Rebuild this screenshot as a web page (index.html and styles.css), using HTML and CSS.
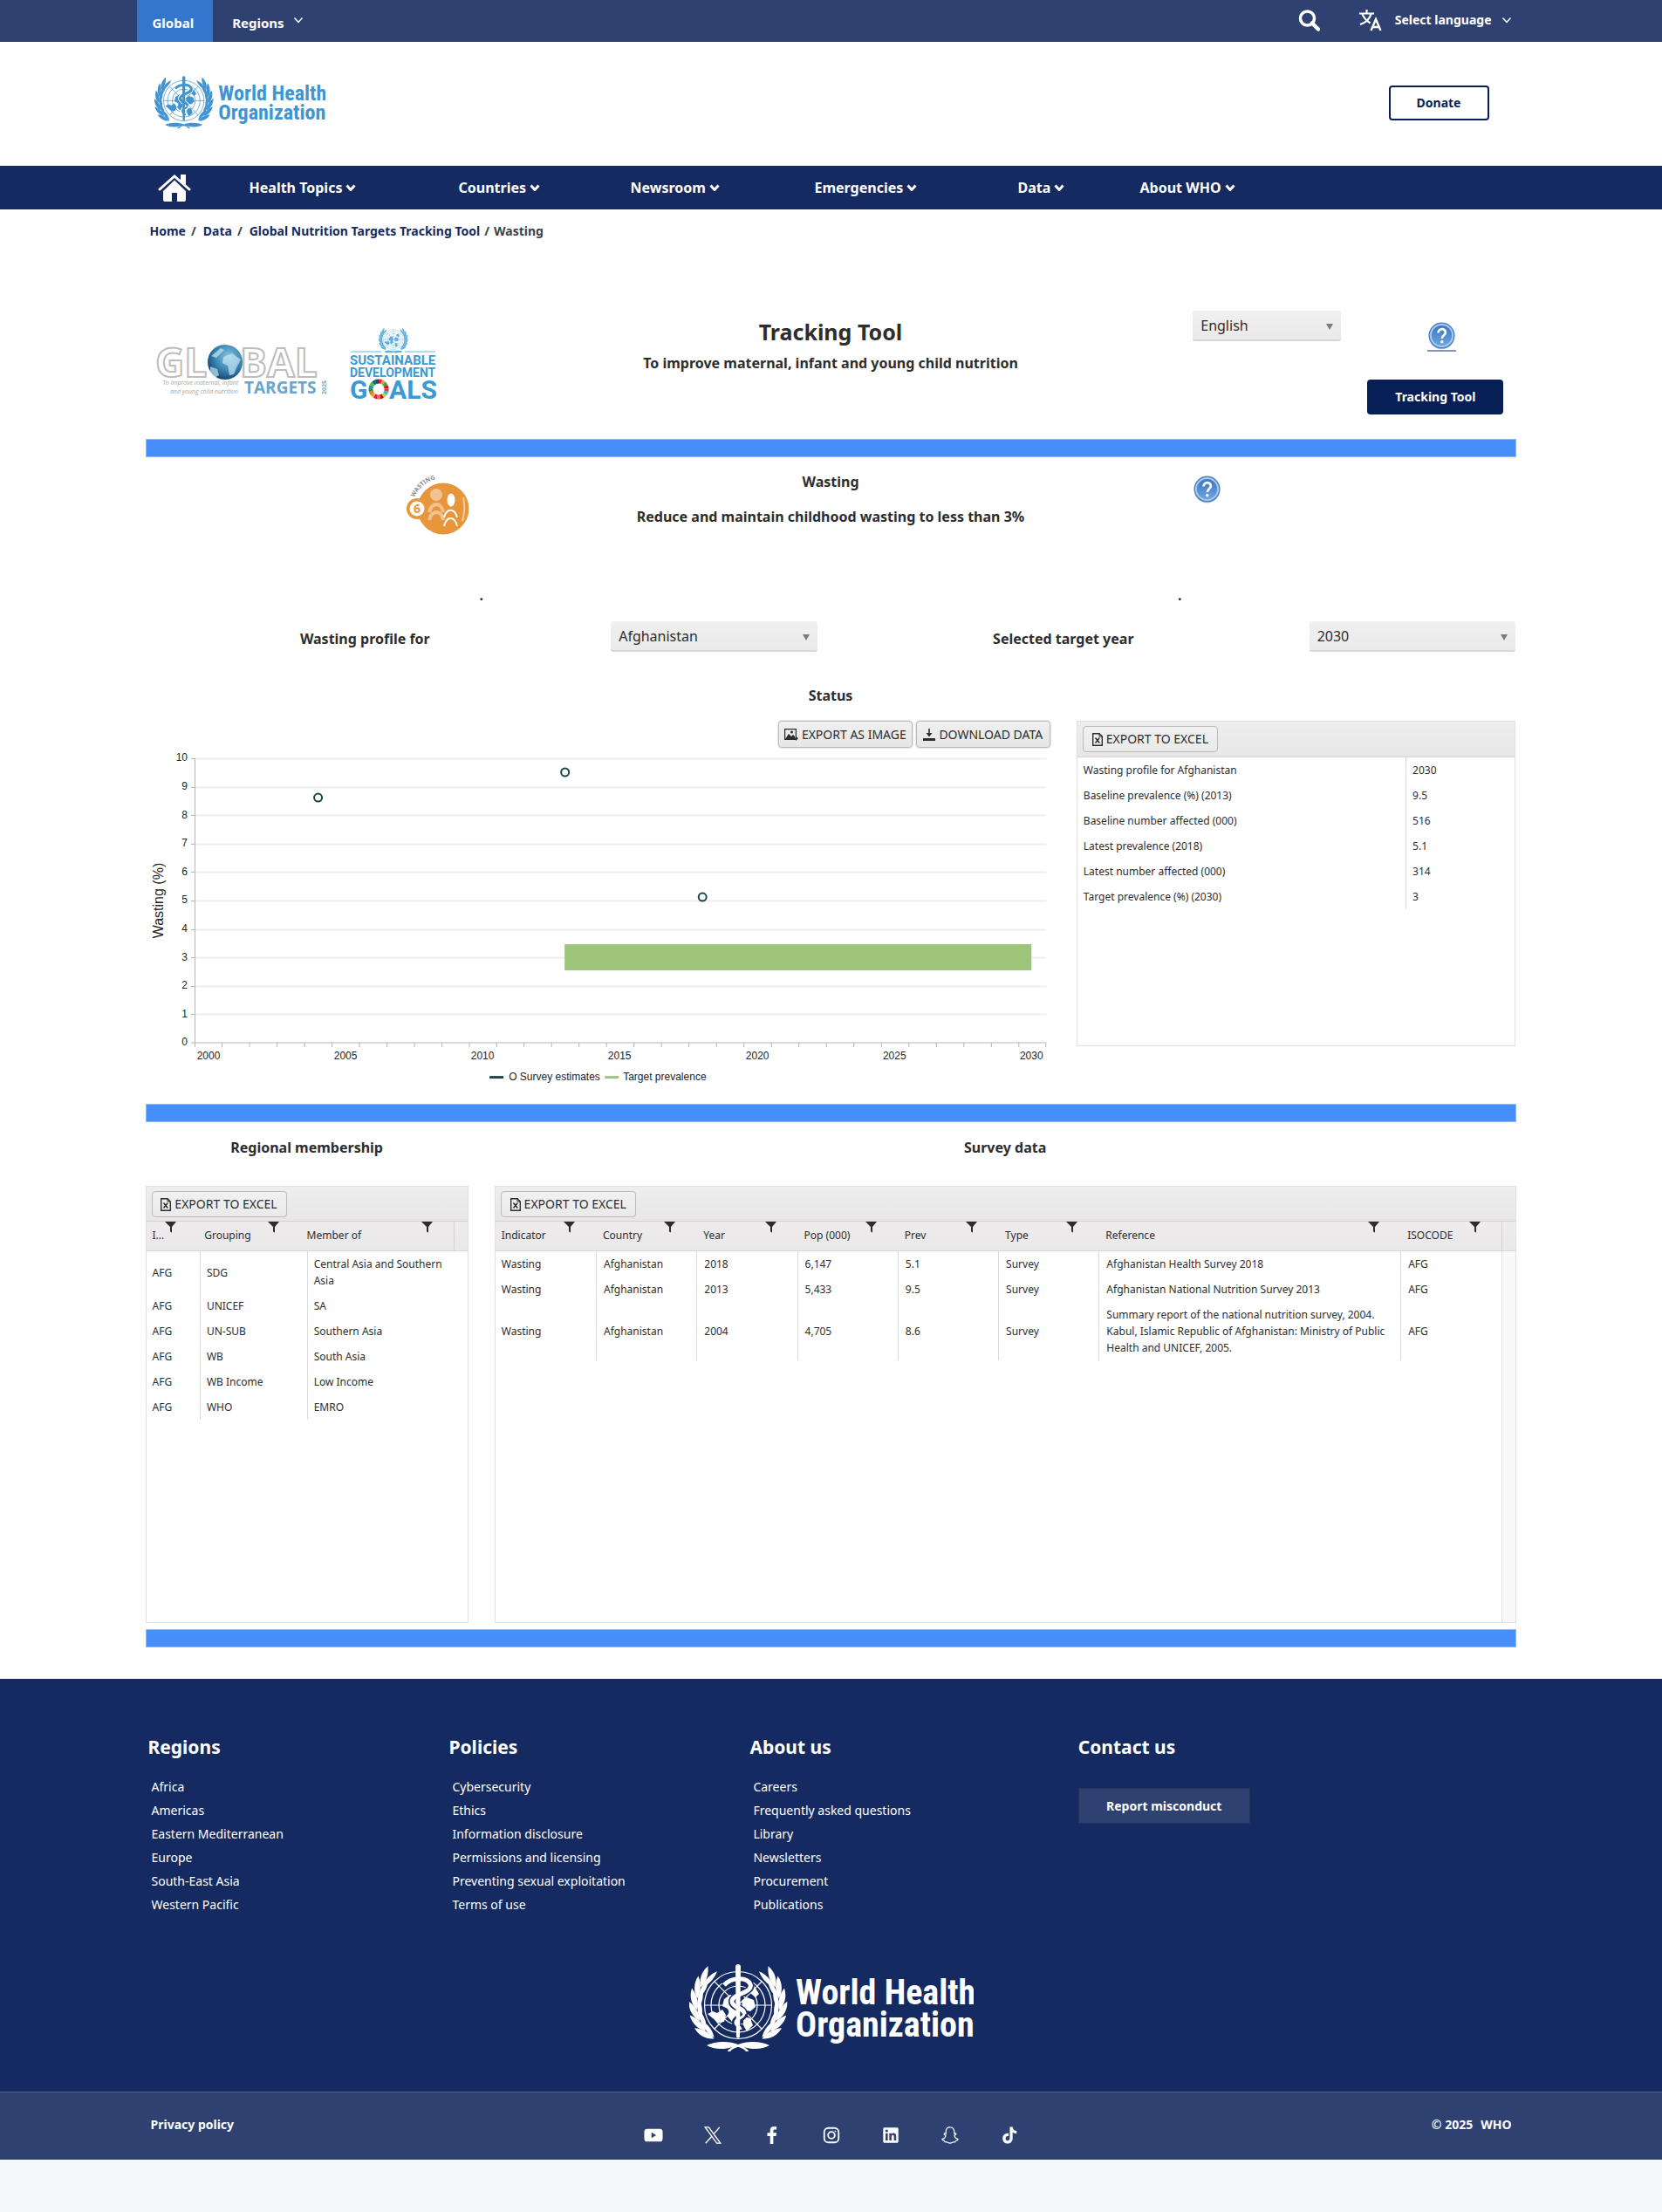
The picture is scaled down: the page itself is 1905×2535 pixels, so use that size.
FILE: index.html
```html
<!DOCTYPE html>
<html lang="en">
<head>
<meta charset="utf-8">
<meta name="viewport" content="width=device-width, initial-scale=1">
<title>Global Nutrition Targets Tracking Tool - Wasting</title>
<link rel="stylesheet" href="styles.css">
</head>
<body>
<svg class="sprite" aria-hidden="true">
  <defs>
    <linearGradient id="help-fill" x1="0" y1="0" x2="0" y2="1"><stop offset="0" stop-color="#3b74c4"/><stop offset="1" stop-color="#6fa5dc"/></linearGradient>
    <radialGradient id="globe-fill" cx=".6" cy=".35" r=".7"><stop offset="0" stop-color="#8cc6e0"/><stop offset=".55" stop-color="#3a86b4"/><stop offset="1" stop-color="#15406b"/></radialGradient>
    <path id="leaf-out" d="M10 58C3 53 -1 44 1 34C7 40 11 48 10 58Z"/>
    <path id="leaf-in" d="M11 57C15 50 16 42 13 32C9 39 8 48 11 57Z"/>
    <g id="leaf"><use href="#leaf-out"/><use href="#leaf-in"/></g>
    <g id="branch">
      <use href="#leaf" transform="rotate(39 56 47)"/>
      <use href="#leaf" transform="rotate(23 56 47)"/>
      <use href="#leaf" transform="rotate(7 56 47)"/>
      <use href="#leaf" transform="rotate(-9 56 47)"/>
      <use href="#leaf" transform="rotate(-25 56 47)"/>
      <use href="#leaf" transform="rotate(-41 56 47)"/>
      <path d="M20 93C30 88 46 88 56 92C64 95 68 98 68 100H65C62 96 56 94 50 95C40 98 28 98 20 93Z"/>
    </g>
    <g id="globe-grid" fill="none" stroke="currentColor" stroke-width="1.2">
      <circle cx="56" cy="47" r="38.500"/><circle cx="56" cy="47" r="31"/><circle cx="56" cy="47" r="22"/><circle cx="56" cy="47" r="12"/>
      <path d="M17 47H95M56 9V86M29 20L83 74M83 20L29 74"/>
    </g>
    <g id="land">
      <path d="M21 57L27 54L32 56L38 52L42 58L40 66L33 67L27 62Z"/>
      <path d="M40 40L47 35L54 36V58L49 66L44 60L46 52L38 48Z"/>
      <path d="M60 42L66 38L74 41L76 49L70 54L62 52Z"/>
      <path d="M62 60L70 62L73 70L66 77L62 70Z"/>
      <path d="M66 30L74 24L80 34L76 38Z"/>
    </g>
    <g id="emblem">
      <use href="#globe-grid"/><use href="#land"/>
      <use href="#branch"/><use href="#branch" transform="translate(112 0) scale(-1 1)"/>
      <g class="snake">
        <path class="snake-edge" d="M40 24C48 15 66 14 70 23C74 33 48 34 49 43C50 51 64 50 63 57C62 63 52 62 53 67C53 71 59 71 59 75"/>
        <path class="snake-body" d="M40 24C48 15 66 14 70 23C74 33 48 34 49 43C50 51 64 50 63 57"/>
        <path class="snake-tail" d="M63 57C62 63 52 62 53 67C53 71 59 71 59 75"/>
        <path d="M53 3C53 -1 59 -1 59 3L58 84H54Z"/>
      </g>
    </g>
    <symbol id="who-logo" viewBox="0 0 326 101">
      <use href="#emblem"/>
      <text class="who-word" x="122" y="46">World Health</text>
      <text class="who-word" x="122" y="83">Organization</text>
    </symbol>
    <symbol id="help" viewBox="0 0 33 33">
      <circle cx="16.500" cy="17.500" r="15" fill="#000" opacity=".15"/>
      <circle cx="16.500" cy="16" r="15.500" fill="#4a80c6"/><circle cx="16.500" cy="16" r="13" fill="url(#help-fill)" stroke="#a9cdf0" stroke-width="2"/>
      <path d="M12.500 13C12.500 7 21 7 21 12.500C21 16 16.800 15.500 16.800 19.500" fill="none" stroke="#fff" stroke-width="2.800"/><circle cx="16.800" cy="23.500" r="1.800" fill="#fff"/>
    </symbol>
    <symbol id="chev" viewBox="0 0 12 8"><path d="M1.500 1.500L6 6.500L10.500 1.500" fill="none" stroke="currentColor"/></symbol>
    <symbol id="funnel" viewBox="0 0 13 13"><path d="M0 0H13L8 6V12.500L6 11.500V6Z"/></symbol>
    <symbol id="excel" viewBox="0 0 12 15"><path d="M.7.700H8L11.300 4V14.300H.7Z" fill="none" stroke="currentColor" stroke-width="1.400"/><path d="M8 .5V4H11.500" fill="none" stroke="currentColor"/><path d="M3.500 5.500L8.300 11.500M8.300 5.500L3.500 11.500" stroke="currentColor" stroke-width="1.500"/></symbol>
    <symbol id="tri" viewBox="0 0 8 7"><path d="M0 0H8L4 7Z"/></symbol>
  </defs>
</svg>

<div class="topbar">
  <div class="topbar-inner">
    <a class="tab tab-active" href="#">Global</a>
    <a class="tab" href="#">Regions <svg class="chev chev-up"><use href="#chev"/></svg></a>
    <div class="topbar-tools">
      <button class="icon-button" type="button" aria-label="Search"><svg width="25" height="25" viewBox="0 0 25 25"><circle cx="10.500" cy="10" r="8" fill="none" stroke="currentColor" stroke-width="3.500"/><path d="M16 15.500L23 22.500" stroke="currentColor" stroke-width="4.500" stroke-linecap="round"/></svg></button>
      <button class="lang" type="button">
        <svg class="line" width="26" height="25" viewBox="0 0 26 25" stroke-width="2.200"><path d="M0 4.500H17M8.500 0V4M13.500 5C12 11 7 15 1 17M3.500 5C5 9.500 8 12.500 12.500 15.500"/><path d="M13.500 24L19 11L24.500 24M15.500 20H22.500" stroke-width="2.400"/></svg>
        <span>Select language</span> <svg class="chev"><use href="#chev"/></svg>
      </button>
    </div>
  </div>
</div>

<header class="masthead">
  <a href="#" aria-label="World Health Organization"><svg class="logo-small"><use href="#who-logo"/></svg></a>
  <button class="donate" type="button">Donate</button>
</header>

<nav class="mainnav" aria-label="Main">
  <div class="mainnav-inner">
    <a href="#" aria-label="Home"><svg width="38" height="31" viewBox="0 0 38 31" fill="currentColor"><path d="M19 6.500L32 19V29Q32 31 30 31H22V21H16V31H8Q6 31 6 29V19Z"/><path d="M2 17L19 2L36 17" fill="none" stroke="currentColor" stroke-width="3" stroke-linecap="round"/><path d="M26 0H32V12L26 7Z"/></svg></a>
    <a href="#">Health Topics <svg class="chev chev-bold"><use href="#chev"/></svg></a>
    <a href="#">Countries <svg class="chev chev-bold"><use href="#chev"/></svg></a>
    <a href="#">Newsroom <svg class="chev chev-bold"><use href="#chev"/></svg></a>
    <a href="#">Emergencies <svg class="chev chev-bold"><use href="#chev"/></svg></a>
    <a href="#">Data <svg class="chev chev-bold"><use href="#chev"/></svg></a>
    <a href="#">About WHO <svg class="chev chev-bold"><use href="#chev"/></svg></a>
  </div>
</nav>

<main class="page">
  <nav class="crumbs" aria-label="Breadcrumb">
    <a href="#">Home</a><span class="slash">/</span><a href="#">Data</a><span class="slash">/</span><a href="#">Global Nutrition Targets Tracking Tool</a><span class="slash-end">/</span><span>Wasting</span>
  </nav>

  <section class="hero">
    <div class="partner-logos">
      <svg width="206" height="84" viewBox="0 0 206 84" role="img" aria-label="Global Targets 2025">
        <text class="gt-big" x="6" y="57">GL</text><text class="gt-big" x="103" y="57">BAL</text>
        <g transform="translate(-3 -1)">
          <circle cx="89" cy="41" r="20" fill="url(#globe-fill)"/>
          <path d="M87 35L97 31L107 38L103 45L99 55L94 56L92 45L86 42ZM72 46L80 49L82 56L77 59L72 52ZM73 34L84 25L88 27L79 36Z" fill="#c5e6f2" opacity=".7"/>
        </g>
        <text class="gt-note" x="101" y="66">To improve maternal, infant</text>
        <text class="gt-note" x="101" y="76">and young child nutrition</text>
        <text class="gt-targets" x="108" y="76">TARGETS</text>
        <text class="gt-year" transform="translate(202 77) rotate(-90)">2025</text>
      </svg>
      <svg width="106" height="84" viewBox="0 0 106 84" role="img" aria-label="Sustainable Development Goals">
        <g class="un" transform="translate(34 0) scale(.3)"><use href="#globe-grid"/><use href="#land"/><use href="#branch"/><use href="#branch" transform="translate(112 0) scale(-1 1)"/></g>
        <path d="M2 28H37M64 28H99" stroke="#6cb6e0" stroke-width="1"/>
        <text class="sdg sdg-a" x="1" y="43">SUSTAINABLE</text>
        <text class="sdg sdg-b" x="1" y="57">DEVELOPMENT</text>
        <text class="sdg sdg-c" x="1" y="82">G</text><text class="sdg sdg-c" x="46" y="82">ALS</text>
        <g class="wheel" transform="rotate(-90 34 71)">
          <circle stroke="#e5243b" cx="34" cy="71" r="9" pathLength="17"/>
          <circle stroke="#dda63a" cx="34" cy="71" r="9" pathLength="17" stroke-dashoffset="-1"/>
          <circle stroke="#4c9f38" cx="34" cy="71" r="9" pathLength="17" stroke-dashoffset="-2"/>
          <circle stroke="#c5192d" cx="34" cy="71" r="9" pathLength="17" stroke-dashoffset="-3"/>
          <circle stroke="#ff3a21" cx="34" cy="71" r="9" pathLength="17" stroke-dashoffset="-4"/>
          <circle stroke="#26bde2" cx="34" cy="71" r="9" pathLength="17" stroke-dashoffset="-5"/>
          <circle stroke="#fcc30b" cx="34" cy="71" r="9" pathLength="17" stroke-dashoffset="-6"/>
          <circle stroke="#a21942" cx="34" cy="71" r="9" pathLength="17" stroke-dashoffset="-7"/>
          <circle stroke="#fd6925" cx="34" cy="71" r="9" pathLength="17" stroke-dashoffset="-8"/>
          <circle stroke="#dd1367" cx="34" cy="71" r="9" pathLength="17" stroke-dashoffset="-9"/>
          <circle stroke="#fd9d24" cx="34" cy="71" r="9" pathLength="17" stroke-dashoffset="-10"/>
          <circle stroke="#bf8b2e" cx="34" cy="71" r="9" pathLength="17" stroke-dashoffset="-11"/>
          <circle stroke="#3f7e44" cx="34" cy="71" r="9" pathLength="17" stroke-dashoffset="-12"/>
          <circle stroke="#0a97d9" cx="34" cy="71" r="9" pathLength="17" stroke-dashoffset="-13"/>
          <circle stroke="#56c02b" cx="34" cy="71" r="9" pathLength="17" stroke-dashoffset="-14"/>
          <circle stroke="#00689d" cx="34" cy="71" r="9" pathLength="17" stroke-dashoffset="-15"/>
          <circle stroke="#19486a" cx="34" cy="71" r="9" pathLength="17" stroke-dashoffset="-16"/>
        </g>
      </svg>
    </div>
    <div class="hero-title">
      <h1>Tracking Tool</h1>
      <p>To improve maternal, infant and young child nutrition</p>
    </div>
    <div class="hero-tools">
      <span class="picker"><select aria-label="Language"><option>English</option></select><svg class="tri"><use href="#tri"/></svg></span>
      <div class="hero-actions">
        <a class="help-link" href="#" aria-label="Help"><svg class="help"><use href="#help"/></svg></a>
        <a class="primary" href="#">Tracking Tool</a>
      </div>
    </div>
  </section>

  <div class="rule"></div>

  <section class="target">
    <svg class="target-icon" width="72" height="70" viewBox="0 0 72 70" role="img" aria-label="Wasting, target 6">
      <circle cx="43" cy="39" r="29.500" fill="#e8963c"/>
      <circle cx="13" cy="39" r="12" fill="#e8963c"/><circle cx="13" cy="39" r="8.500" fill="#fff"/>
      <text class="six" x="9" y="44">6</text>
      <circle cx="35" cy="23" r="7" fill="#f2c392"/>
      <path d="M27 43C30 31 41 31 43 43M27 52C30 40 41 40 43 52" fill="none" stroke="#f2c392" stroke-width="4"/>
      <ellipse cx="52" cy="29" rx="4.500" ry="7.500" fill="#fff"/>
      <path d="M44 49C47 38 56 38 59 49M44 59C47 47 56 47 59 59" fill="none" stroke="#fff" stroke-width="2"/>
      <path d="M66 26Q69 39 65 53" fill="none" stroke="#f4cda5" stroke-width="2"/>
      <path id="arc" d="M10 26A36 36 0 0 1 42 4" fill="none"/>
      <text class="arc-text"><textPath href="#arc">WASTING</textPath></text>
    </svg>
    <div class="target-text"><h2>Wasting</h2><h2>Reduce and maintain childhood wasting to less than 3%</h2></div>
    <a class="target-help" href="#" aria-label="About wasting"><svg class="help"><use href="#help"/></svg></a>
  </section>

  <section class="filters">
    <div class="filter"><p class="dot">.</p><label for="country">Wasting profile for</label><span class="picker"><select id="country"><option>Afghanistan</option></select><svg class="tri"><use href="#tri"/></svg></span></div>
    <div class="filter"><p class="dot">.</p><label for="year">Selected target year</label><span class="picker"><select id="year"><option>2030</option></select><svg class="tri"><use href="#tri"/></svg></span></div>
  </section>

  <h2 class="status-title">Status</h2>
  <section class="status">
    <div class="chart-box">
      <div class="chart-tools">
        <button class="tool raised" type="button"><svg width="16" height="14" viewBox="0 0 16 14"><path d="M.6.600H13.400V12.400H.6Z" fill="none" stroke="currentColor" stroke-width="1.200"/><path d="M1 12L5 6L8 9L10 7L12 9V12Z"/><circle cx="8.500" cy="4" r="1.500"/><path d="M9 10.500H13V8.500L16 11.300L13 14V12H9Z"/></svg>EXPORT AS IMAGE</button>
        <button class="tool raised" type="button"><svg width="14" height="14" viewBox="0 0 14 14"><path d="M0 11H14V14H0Z"/><path d="M6.200 0H7.800V5H10.500L7 9.500L3.500 5H6.200Z"/></svg>DOWNLOAD DATA</button>
      </div>
      <svg class="chart" viewBox="0 0 1037 393" role="img" aria-label="Wasting prevalence by year">
        <path class="grid" d="M56 12.500H1032M56 45.500H1032M56 77.500H1032M56 110.500H1032M56 142.500H1032M56 175.500H1032M56 208.500H1032M56 240.500H1032M56 273.500H1032M56 305.500H1032"/>
        <path class="axis" d="M56.500 12V343M52 12.500H56M52 45.500H56M52 77.500H56M52 110.500H56M52 142.500H56M52 175.500H56M52 208.500H56M52 240.500H56M52 273.500H56M52 305.500H56M52 338H1032M87.500 338V343M119 338V343M150.500 338V343M182 338V343M213.500 338V343M245 338V343M276.500 338V343M308 338V343M339.500 338V343M371 338V343M402 338V343M433.500 338V343M465 338V343M496.500 338V343M528 338V343M559.500 338V343M591 338V343M622.500 338V343M654 338V343M685.500 338V343M717 338V343M748.500 338V343M780 338V343M811.500 338V343M843 338V343M874.500 338V343M906 338V343M937.500 338V343M969 338V343M1000.500 338V343M1031.500 338V343"/>
        <rect x="480" y="225" width="535" height="30" fill="#9dc57a"/>
        <g class="marks"><circle cx="197.500" cy="57" r="4.500"/><circle cx="480.500" cy="28" r="4.500"/><circle cx="638" cy="171" r="4.500"/></g>
        <g class="y-labels"><text x="48" y="15">10</text><text x="48" y="48">9</text><text x="48" y="81">8</text><text x="48" y="113">7</text><text x="48" y="146">6</text><text x="48" y="178">5</text><text x="48" y="211">4</text><text x="48" y="244">3</text><text x="48" y="276">2</text><text x="48" y="309">1</text><text x="48" y="341">0</text></g>
        <g class="x-labels"><text x="72" y="357">2000</text><text x="229" y="357">2005</text><text x="386" y="357">2010</text><text x="543" y="357">2015</text><text x="701" y="357">2020</text><text x="858" y="357">2025</text><text x="1015" y="357">2030</text></g>
        <text class="y-title" transform="translate(20 175) rotate(-90)">Wasting (%)</text>
        <path d="M394 377.500H410" stroke="#1c4747" stroke-width="3"/><text class="legend" x="416" y="381">O Survey estimates</text>
        <path d="M526 377.500H542" stroke="#9dc57a" stroke-width="3"/><text class="legend" x="547" y="381">Target prevalence</text>
      </svg>
    </div>
    <div class="panel panel-status">
      <div class="panel-bar"><button class="tool" type="button"><svg width="12" height="15"><use href="#excel"/></svg>EXPORT TO EXCEL</button></div>
      <table class="rows rows-status">
        <tbody>
          <tr><td>Wasting profile for Afghanistan</td><td>2030</td></tr>
          <tr><td>Baseline prevalence (%) (2013)</td><td>9.5</td></tr>
          <tr><td>Baseline number affected (000)</td><td>516</td></tr>
          <tr><td>Latest prevalence (2018)</td><td>5.1</td></tr>
          <tr><td>Latest number affected (000)</td><td>314</td></tr>
          <tr><td>Target prevalence (%) (2030)</td><td>3</td></tr>
        </tbody>
      </table>
    </div>
  </section>

  <div class="rule"></div>

  <section class="tables">
    <h2>Regional membership</h2>
    <h2 class="wide">Survey data</h2>
    <div class="panel panel-tall">
      <div class="panel-bar"><button class="tool" type="button"><svg width="12" height="15"><use href="#excel"/></svg>EXPORT TO EXCEL</button></div>
      <div class="head-wrap">
        <table class="head cols-region"><thead><tr><th>I...<svg class="funnel"><use href="#funnel"/></svg></th><th>Grouping<svg class="funnel"><use href="#funnel"/></svg></th><th>Member of<svg class="funnel"><use href="#funnel"/></svg></th></tr></thead></table>
      </div>
      <div class="body-wrap">
        <table class="rows cols-region">
          <tbody>
            <tr><td>AFG</td><td>SDG</td><td>Central Asia and Southern Asia</td></tr>
            <tr><td>AFG</td><td>UNICEF</td><td>SA</td></tr>
            <tr><td>AFG</td><td>UN-SUB</td><td>Southern Asia</td></tr>
            <tr><td>AFG</td><td>WB</td><td>South Asia</td></tr>
            <tr><td>AFG</td><td>WB Income</td><td>Low Income</td></tr>
            <tr><td>AFG</td><td>WHO</td><td>EMRO</td></tr>
          </tbody>
        </table>
      </div>
    </div>
    <div class="panel panel-tall wide">
      <div class="panel-bar"><button class="tool" type="button"><svg width="12" height="15"><use href="#excel"/></svg>EXPORT TO EXCEL</button></div>
      <div class="head-wrap">
        <table class="head cols-survey"><thead><tr><th>Indicator<svg class="funnel"><use href="#funnel"/></svg></th><th>Country<svg class="funnel"><use href="#funnel"/></svg></th><th>Year<svg class="funnel"><use href="#funnel"/></svg></th><th>Pop (000)<svg class="funnel"><use href="#funnel"/></svg></th><th>Prev<svg class="funnel"><use href="#funnel"/></svg></th><th>Type<svg class="funnel"><use href="#funnel"/></svg></th><th>Reference<svg class="funnel"><use href="#funnel"/></svg></th><th>ISOCODE<svg class="funnel"><use href="#funnel"/></svg></th></tr></thead></table>
      </div>
      <div class="body-wrap body-scroll">
        <table class="rows cols-survey">
          <tbody>
            <tr><td>Wasting</td><td>Afghanistan</td><td>2018</td><td>6,147</td><td>5.1</td><td>Survey</td><td>Afghanistan Health Survey 2018</td><td>AFG</td></tr>
            <tr><td>Wasting</td><td>Afghanistan</td><td>2013</td><td>5,433</td><td>9.5</td><td>Survey</td><td>Afghanistan National Nutrition Survey 2013</td><td>AFG</td></tr>
            <tr><td>Wasting</td><td>Afghanistan</td><td>2004</td><td>4,705</td><td>8.6</td><td>Survey</td><td>Summary report of the national nutrition survey, 2004. Kabul, Islamic Republic of Afghanistan: Ministry of Public Health and UNICEF, 2005.</td><td>AFG</td></tr>
          </tbody>
        </table>
      </div>
    </div>
  </section>

  <div class="rule"></div>
</main>

<footer>
  <div class="footer-main">
    <div class="footer-cols">
      <div><h3>Regions</h3><ul><li><a href="#">Africa</a></li><li><a href="#">Americas</a></li><li><a href="#">Eastern Mediterranean</a></li><li><a href="#">Europe</a></li><li><a href="#">South-East Asia</a></li><li><a href="#">Western Pacific</a></li></ul></div>
      <div><h3>Policies</h3><ul><li><a href="#">Cybersecurity</a></li><li><a href="#">Ethics</a></li><li><a href="#">Information disclosure</a></li><li><a href="#">Permissions and licensing</a></li><li><a href="#">Preventing sexual exploitation</a></li><li><a href="#">Terms of use</a></li></ul></div>
      <div><h3>About us</h3><ul><li><a href="#">Careers</a></li><li><a href="#">Frequently asked questions</a></li><li><a href="#">Library</a></li><li><a href="#">Newsletters</a></li><li><a href="#">Procurement</a></li><li><a href="#">Publications</a></li></ul></div>
      <div><h3>Contact us</h3><button class="report" type="button">Report misconduct</button></div>
    </div>
    <a class="footer-logo" href="#" aria-label="World Health Organization"><svg class="logo-large"><use href="#who-logo"/></svg></a>
  </div>
  <div class="footer-bar">
    <div class="footer-bar-inner">
      <a href="#">Privacy policy</a>
      <div class="social">
        <a href="#" aria-label="YouTube"><svg viewBox="0 0 24 24"><path fill-rule="evenodd" d="M4 4H20Q23.500 4 23.500 8V16Q23.500 20 20 20H4Q.5 20 .5 16V8Q.5 4 4 4ZM9.500 8.500V15.500L15.500 12Z"/></svg></a>
        <a href="#" aria-label="X"><svg viewBox="0 0 24 24"><path d="M2.500 2H7L21.500 22H17ZM20.500 2L13.200 10.500M10.800 13.300L3 22" fill="none" stroke="currentColor" stroke-width="1.500"/></svg></a>
        <a href="#" aria-label="Facebook"><svg viewBox="0 0 24 24"><path d="M9.500 23V13H6V9H9.500V6C9.500 2.500 11.500 1 14.500 1H17.500V5H15.500C14 5 13.500 5.600 13.500 7V9H17.500L17 13H13.500V23Z"/></svg></a>
        <a href="#" aria-label="Instagram"><svg class="line" viewBox="0 0 24 24" stroke-width="2"><rect x="3" y="3" width="18" height="18" rx="5"/><circle cx="12" cy="12" r="4.200"/><circle cx="17" cy="7" r=".6" stroke-width="1"/></svg></a>
        <a href="#" aria-label="LinkedIn"><svg viewBox="0 0 24 24"><path fill-rule="evenodd" d="M4 2.500H20Q21.500 2.500 21.500 4V20Q21.500 21.500 20 21.500H4Q2.500 21.500 2.500 20V4Q2.500 2.500 4 2.500ZM5.500 9.500V18.500H8.300V9.500ZM5.300 5.300V8H8.500V5.300ZM10.200 9.500V18.500H13V14C13 11.200 16 11 16 14V18.500H18.800V13C18.800 9 14.500 8.300 13 10.800V9.500Z"/></svg></a>
        <a href="#" aria-label="Snapchat"><svg class="line" viewBox="0 0 24 24" stroke-width="1.300"><path d="M12 2C8.500 2 6.800 4.500 6.800 7.500V10L4.800 9.700C4 10.500 5 11.500 6.500 12C6.500 14.500 4.500 16.300 2 17C2 18.500 3.500 18.700 5 19L5.500 20.300C8 19.800 9.500 22 12 22C14.500 22 16 19.800 18.500 20.300L19 19C20.500 18.700 22 18.500 22 17C19.500 16.300 17.500 14.500 17.500 12C19 11.500 20 10.500 19.200 9.700L17.200 10V7.500C17.200 4.500 15.500 2 12 2Z"/></svg></a>
        <a href="#" aria-label="TikTok"><svg viewBox="0 0 24 24"><path d="M12.500 1.500H16C16.300 4.500 18 6.200 21 6.500V10C19 10 17.500 9.400 16 8.500V16C16 24.500 3.500 24.500 3.500 16C3.500 11.500 7 9 11 9.500V13.200C8.500 12.500 7.200 14 7.200 16C7.200 19.800 12.500 19.500 12.500 16Z"/></svg></a>
      </div>
      <p class="copy"><span>© 2025</span><span>WHO</span></p>
    </div>
  </div>
</footer>
</body>
</html>
```
FILE: styles.css
```css
* { box-sizing: border-box; }
body { margin: 0; background: #f6f7f9; color: #2d2d2d; font: 14px/20px "Noto Sans", sans-serif; }
a { color: inherit; text-decoration: none; }
h1, h2, h3, p, ul { margin: 0; padding: 0; }
ul { list-style: none; }
button, select { font: inherit; color: inherit; }
button { cursor: pointer; }
svg { display: block; fill: currentColor; flex: none; }
.line { fill: none; stroke: currentColor; }
.sprite { position: absolute; width: 0; height: 0; }

.who-word { font: bold 40px "Liberation Sans Narrow", "Roboto Condensed", "Open Sans Condensed", sans-serif; }
.snake-edge { fill: none; stroke: var(--logo-bg); stroke-width: 8; }
.snake-body { fill: none; stroke: currentColor; stroke-width: 5; }
.snake-tail { fill: none; stroke: currentColor; stroke-width: 3; }

.chev { width: 12px; height: 8px; stroke-width: 1.5; }
.chev-up { margin-bottom: 6px; }
.chev-bold { stroke-width: 3; }

.topbar { background: #2e4170; color: #fff; font-weight: bold; }
.topbar-inner { max-width: 1592px; margin: 0 auto; height: 48px; display: flex; }
.tab { display: flex; align-items: center; gap: 10px; padding: 4px 22px 0; font-size: 15px; }
.tab-active { background: #3376cd; padding: 4px 22px 0 18px; }
.topbar-tools { margin-left: auto; display: flex; align-items: center; gap: 45px; padding: 0 16px 2px 0; }
.icon-button, .lang { background: none; border: 0; padding: 0; font-weight: bold; display: flex; align-items: center; }
.lang { gap: 11px; font-size: 14px; }
.lang svg:first-child { margin-right: 4px; }

.masthead { background: #fff; height: 142px; padding: 0 calc(50% - 754px) 0 calc(50% - 776px); display: flex; justify-content: space-between; align-items: center; }
.masthead a { padding-bottom: 3px; }
.logo-small { width: 196px; height: 61px; color: #4194d2; --logo-bg: #fff; }
.donate { width: 115px; height: 40px; margin-bottom: 2px; background: #fff; border: 2px solid #071f57; border-radius: 4px; color: #071f57; font-weight: bold; }

.mainnav { background: #152a60; color: #fff; font-size: 16px; font-weight: bold; }
.mainnav-inner { max-width: 1570px; margin: 0 auto; padding-left: 13px; height: 50px; display: grid; grid-template-columns: 105fr 240fr 197fr 211fr 233fr 140fr 431fr; align-items: center; }
.mainnav a { display: flex; align-items: center; gap: 4px; }

.page { background: #fff; padding: 0 calc(50% - 785px) 36px calc(50% - 786px); }
.crumbs { display: flex; padding: 15px 5px; font-weight: bold; color: #3c4245; }
.crumbs a { color: #152a60; }
.slash { margin: 0 8px 0 6px; }
.slash-end { margin: 0 5px; }

h1 { font-size: 25px; line-height: 32px; }
h2, .hero-title p { font-size: 16px; line-height: 24px; font-weight: bold; }

.hero, .target { display: grid; grid-template-columns: repeat(4, 1fr); column-gap: 30px; }
.hero { padding-top: 66px; height: 213px; }
.partner-logos { display: flex; gap: 22px; padding: 19px 0 0 5px; }
.hero-title { grid-column: span 2; text-align: center; padding-top: 8px; }
.hero-title p { margin-top: 8px; }
.hero-tools { display: grid; grid-template-columns: 1fr 1fr; column-gap: 30px; }
.hero-actions { padding-top: 13px; display: flex; flex-direction: column; align-items: center; }
.help { width: 33px; height: 32px; }
.help-link { border-bottom: 2px solid #8492bb; margin-bottom: 32px; }
.primary { align-self: flex-start; width: 156px; height: 40px; line-height: 40px; border-radius: 4px; background: #071f57; color: #fff; font-weight: bold; text-align: center; }
.gt-big { font: bold 46px "Open Sans", sans-serif; fill: #fff; stroke: #bdbdbd; stroke-width: 2; }
.gt-note { font: italic 7px "Open Sans", sans-serif; fill: #a5a5a5; text-anchor: end; }
.gt-targets { font: bold 19px "Open Sans", sans-serif; fill: #6aa6cc; }
.gt-year { font: bold 7px "Open Sans", sans-serif; fill: #7aa9c6; }
.un { color: #5aaede; }
.sdg { font-family: Roboto, sans-serif; font-weight: bold; fill: #3a9ad5; }
.sdg-a { font-size: 15px; }
.sdg-b { font-size: 14px; }
.sdg-c { font-size: 30px; }
.wheel { fill: none; stroke-width: 5; stroke-dasharray: 1 16; }

.picker { position: relative; display: block; }
.picker select { appearance: none; width: 100%; height: 35px; padding: 0 9px; border: 0; border-bottom: 2px solid #d6d6d6; border-radius: 3px; background: linear-gradient(#f0f0f0, #eaeaea); font-size: 16px; }
.tri { position: absolute; right: 9px; top: 15px; width: 8px; height: 7px; color: #7b7b7b; pointer-events: none; }

.rule { height: 21px; background: #468ef9; border: 1px solid #8db9f8; }

.target { padding-top: 16px; height: 146px; }
.target-icon { justify-self: end; margin-top: 4px; overflow: visible; }
.target-text { grid-column: span 2; text-align: center; }
.target-text h2 + h2 { margin-top: 16px; }
.target-help { padding-top: 5px; }
.six { font: bold 14px "Noto Sans", sans-serif; fill: #e8963c; }
.arc-text { font: bold 7px "Noto Sans", sans-serif; fill: #8a8a8a; }

.filters { display: grid; grid-template-columns: 1fr 1fr; column-gap: 30px; }
.filter { display: grid; grid-template-columns: repeat(3, 1fr); column-gap: 30px; align-items: center; font-size: 16px; line-height: 24px; font-weight: bold; text-align: center; }
.filter label { grid-column: span 2; padding-top: 4px; }
.filter select { font-weight: normal; }
.dot { grid-column: span 3; margin-bottom: 18px; }
.status-title { text-align: center; padding: 38px 0 17px; }

.status { display: grid; grid-template-columns: repeat(12, 1fr); column-gap: 30px; padding-bottom: 15px; }
.chart-box { grid-column: span 8; }
.panel-status { grid-column: span 4; height: 373px; }
.chart-tools { display: flex; justify-content: flex-end; gap: 4px; }
.tool { width: 155px; height: 30px; padding: 0; display: flex; align-items: center; justify-content: center; gap: 4px; border: 1px solid #bbb; border-radius: 4px; background: linear-gradient(#f2f1f1, #ebeaea); white-space: nowrap; }
.raised { width: 154px; height: 31px; box-shadow: 0 0 2px #aaa; background: linear-gradient(#f0f0f0, #e6e6e6); }
.chart { width: 100%; height: auto; font: 12px "Liberation Sans", Arial, sans-serif; color: #232323; }
.grid { stroke: #eee; stroke-width: 2; }
.axis { fill: none; stroke: #b5b5b5; stroke-width: 1; }
.marks { fill: #fff; stroke: #1c4747; stroke-width: 2; }
.y-labels { text-anchor: end; }
.x-labels, .y-title { text-anchor: middle; }
.y-title { font-size: 16px; }

.panel { border: 1px solid #e2e2e2; background: #fff; display: flex; flex-direction: column; min-width: 0; }
.panel-bar { height: 41px; padding: 5px 6px; background: linear-gradient(#eeeeee, #e8e6e6); border-bottom: 1px solid #d2d0d0; }
table { border-collapse: separate; border-spacing: 0; table-layout: fixed; width: 100%; font-size: 12px; line-height: 19px; }
td { padding: 5px 7px; text-align: left; }
td + td { border-left: 1px solid #dcdcdc; }
.rows-status td:last-child { width: 25%; }

.tables { display: grid; grid-template-columns: repeat(4, 1fr); column-gap: 30px; padding: 17px 0 7px; text-align: center; }
.tables h2 { margin-bottom: 32px; }
.wide { grid-column: span 3; }
.panel-tall { height: 501px; }
.panel-tall .panel-bar { height: 40px; }
.head-wrap { background: linear-gradient(#eeeced, #e9e7e7); border-bottom: 1px solid #d8d6d6; padding-right: 15px; }
.head { border-right: 1px solid #d2d0d0; }
.head th { position: relative; height: 33px; padding: 0 7px 2px; font-weight: normal; text-align: left; }
.head th + th { padding-left: 8px; }
.funnel { position: absolute; top: 0; right: 24px; width: 13px; height: 13px; }
.cols-region th:nth-child(1), .cols-region td:nth-child(1) { width: calc(100% / 6); }
.cols-region th:nth-child(2), .cols-region td:nth-child(2) { width: calc(100% / 3); }
.cols-survey th, .cols-survey td { width: 10%; }
.cols-survey th:nth-child(7), .cols-survey td:nth-child(7) { width: 30%; }
.cols-survey td + td { padding-left: 8px; }
.body-wrap { flex: 1; }
.body-scroll { margin-right: 15px; border-right: 1px solid #e2e2e2; box-shadow: 15px 0 #f9f9f9; }

footer { color: #fff; }
.footer-main { background: #152a60; padding: 62px calc(50% - 785px) 45px; }
.footer-cols { display: grid; grid-template-columns: 22fr 22fr 24fr 32fr; padding-left: 2px; }
h3 { font-size: 21px; line-height: 32px; margin-bottom: 17px; }
.footer-cols ul { padding-left: 4px; }
.footer-cols li { padding: 3px 0 4px; height: 27px; }
.report { width: 197px; height: 41px; margin-top: 14px; background: #2e4170; border: 1px solid #22345f; font-weight: bold; color: #fff; }
.footer-logo { display: block; width: 326px; margin: 54px auto 0; }
.logo-large { width: 326px; height: 101px; --logo-bg: #152a60; }
.footer-bar { background: #2e4170; border-top: 1px solid #54648d; font-weight: bold; }
.footer-bar-inner { max-width: 1570px; margin: 0 auto; padding: 27px 5px 0; height: 77px; display: grid; grid-template-columns: 1fr auto 1fr; }
.social { display: flex; gap: 46px; padding-top: 11px; }
.social svg { width: 22px; height: 22px; }
.copy { display: flex; justify-content: flex-end; gap: 9px; }
```
